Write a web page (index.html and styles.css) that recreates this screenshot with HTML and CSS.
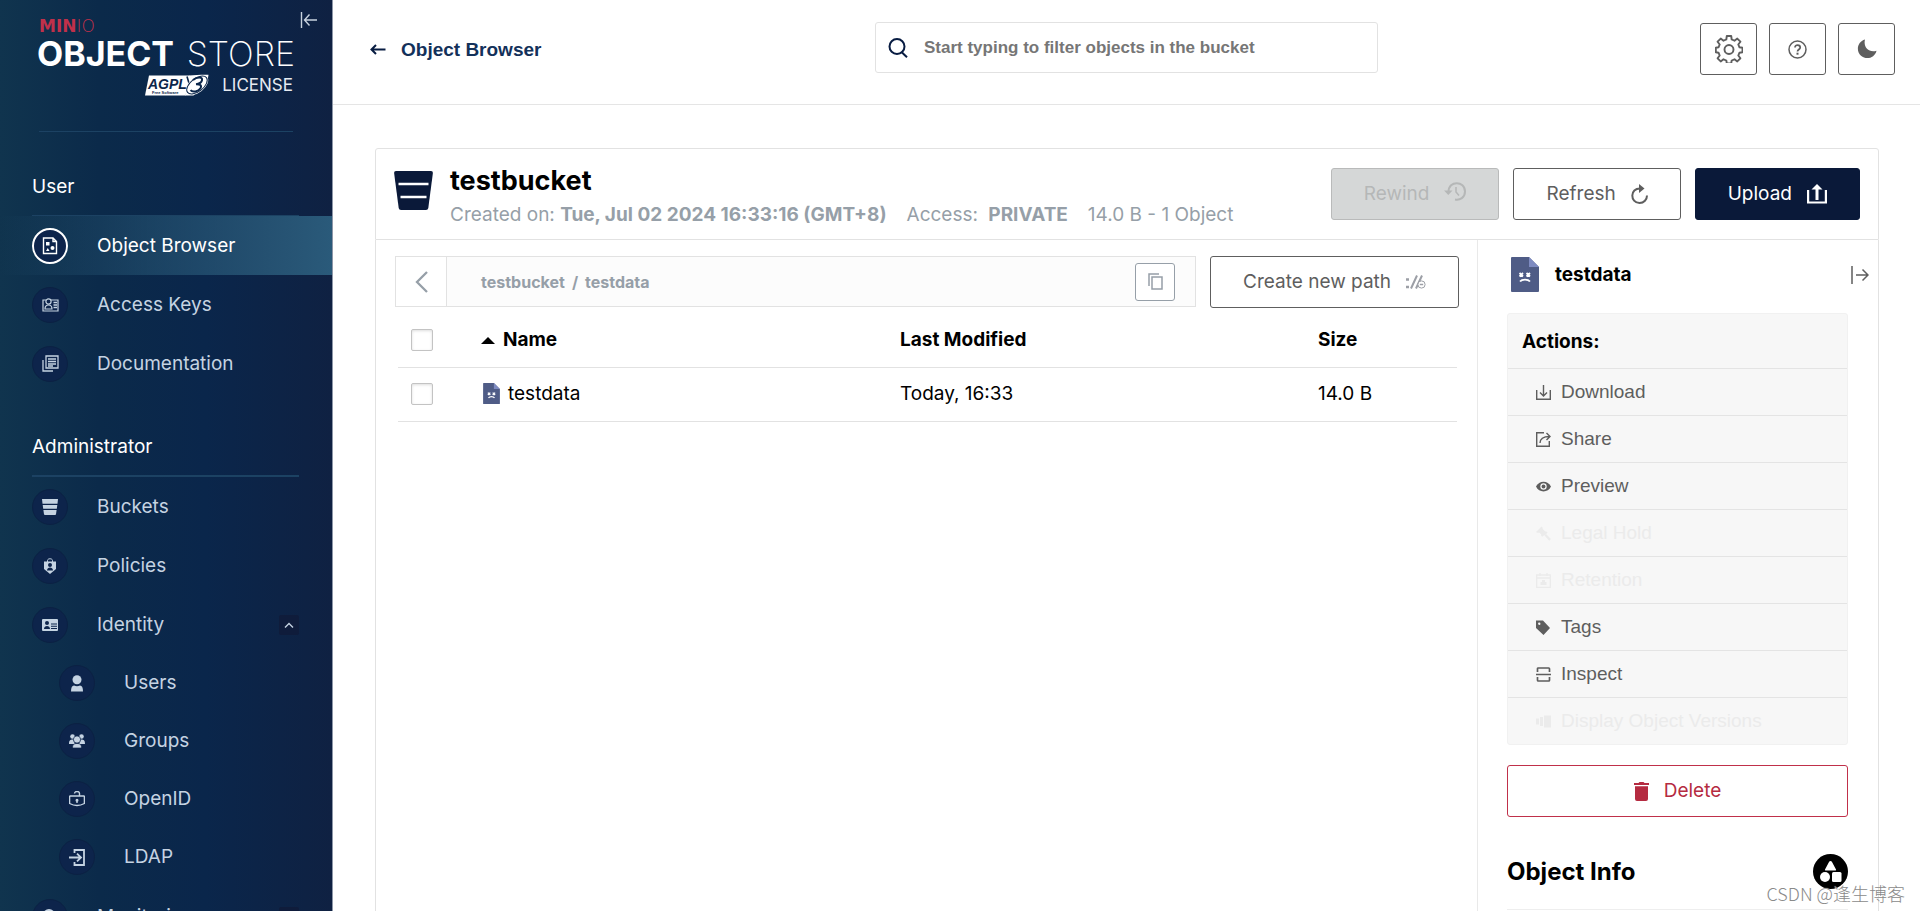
FILE: index.html
```html
<!DOCTYPE html>
<html lang="en">
<head>
<meta charset="utf-8">
<title>MinIO Console</title>
<link rel="stylesheet" href="styles.css">
</head>
<body>
<div class="app">
  <aside class="sidebar">
    <button class="collapse" type="button" aria-label="Collapse menu">
      <svg width="18" height="16" viewBox="0 0 18 16" fill="none" stroke="currentColor" stroke-width="1.4"><path d="M1.5 0v16M17 8H4.500M9.500 2.500L4.500 8l5 5.500"/></svg>
    </button>
    <div class="logo">
      <svg class="logo-art" width="256" height="80" viewBox="0 0 256 80" role="img" aria-label="MinIO Object Store AGPLv3 License">
        <text x="0" y="14" class="logo-brand">MIN<tspan class="logo-thin">IO</tspan></text>
        <text x="-2" y="48" class="logo-name">OBJECT</text>
        <text x="256" y="48" text-anchor="end" class="logo-name logo-light">STORE</text>
        <path d="M110 57.500h40.500l-4 20H106z" fill="#fff"/>
        <path d="M150 57.500c6-.5 13-1 19.500-.8l-1 6-14 14.800H146z" fill="#fff"/>
        <path d="M148 58.500l4 13.500L160 61" fill="none" stroke="#0b264a" stroke-width="1.600"/>
        <ellipse cx="158" cy="67" rx="13" ry="7.500" transform="rotate(-38 158 67)" fill="#fff"/>
        <ellipse cx="158" cy="67" rx="12" ry="6.500" transform="rotate(-38 158 67)" fill="none" stroke="#0b264a"/>
        <path d="M154 62c4-3.500 10-3.500 9 .3-.5 2.500-4 3.700-6 3.900 4-.2 6 1.200 4.500 4-2 3.500-8 4.500-10 2" fill="none" stroke="#0b264a" stroke-width="2"/>
        <text x="109" y="71" class="logo-agpl">AGPL</text>
        <text x="113" y="76" class="logo-free">Free Software</text>
        <text x="254" y="73" text-anchor="end" class="logo-license">LICENSE</text>
      </svg>
    </div>
    <nav class="menu" aria-label="Main">
      <h2 class="menu-title">User</h2>
      <ul class="menu-list">
        <li><a class="item active" href="#"><span class="dot"><svg width="16" height="18" viewBox="0 0 16 18" fill="none" stroke="currentColor" stroke-width="1.400"><path d="M1.500 1h9.500l3.500 3.500V16.500h-13zM11 1v3.500h3.500"/><path d="M4 5h3.500v3.500H4zM4 14l1.800-3 1.700 3z" fill="currentColor" stroke="none"/><circle cx="10.500" cy="11" r="2" fill="currentColor" stroke="none"/></svg></span>Object Browser</a></li>
        <li><a class="item" href="#"><span class="dot"><svg width="17" height="14" viewBox="0 0 17 14" fill="none" stroke="currentColor" stroke-width="1.200"><path d="M4 2H1v11h15V2H9"/><circle cx="6.500" cy="3.500" r="2.600"/><path d="M3 11c0-2.500 1-4 3.500-4s3.500 1.500 3.500 4z"/><path d="M11.500 4.500H15M11.500 7H15M11.500 9.500H15" stroke-width="1.600"/></svg></span>Access Keys</a></li>
        <li><a class="item" href="#"><span class="dot"><svg width="17" height="17" viewBox="0 0 17 17" fill="none" stroke="currentColor" stroke-width="1.300"><path d="M4 1h12v12H4zM6 4h8M6 6.500h8M6 9h8M6 11h5M1 5v11h10"/></svg></span>Documentation</a></li>
      </ul>
      <h2 class="menu-title admin">Administrator</h2>
      <ul class="menu-list">
        <li><a class="item" href="#"><span class="dot"><svg width="16" height="16" viewBox="0 0 16 16" fill="currentColor"><path d="M0 0h16l-.5 4.700H.5zM.7 6h14.600l-.5 3.800H1.200zM1.400 11h13.200L14 15.200q-.1.800-1 .8H3q-.9 0-1-.8z"/></svg></span>Buckets</a></li>
        <li><a class="item" href="#"><span class="dot"><svg width="12" height="16" viewBox="0 0 12 16"><path d="M3.500 4V2.500C3.500.2 8.500.2 8.500 2.500V4" fill="none" stroke="currentColor"/><path d="M0 3.500h12V11l-6 5-6-5z" fill="currentColor"/><circle cx="6" cy="7" r="2" fill="#0d244b"/><path d="M3 12.500c0-4 6-4 6 0z" fill="#0d244b"/></svg></span>Policies</a></li>
        <li><a class="item" href="#"><span class="dot"><svg width="16" height="12" viewBox="0 0 16 12"><rect width="16" height="12" rx="1" fill="currentColor"/><circle cx="5" cy="4" r="2" fill="#0d244b"/><path d="M2 10c0-4 6-4 6 0zM9 4.500h6v1H9zM9 6.800h6v1H9zM9 9h6v1H9z" fill="#0d244b"/></svg></span>Identity<span class="toggle"><svg width="10" height="6" viewBox="0 0 10 6" fill="none" stroke="currentColor" stroke-width="1.400"><path d="M1 5.500l4-4 4 4"/></svg></span></a>
          <ul class="menu-list sub">
            <li><a class="item" href="#"><span class="dot"><svg width="12" height="17" viewBox="0 0 12 17" fill="currentColor"><circle cx="6" cy="4.700" r="4.500"/><path d="M0 16.500c0-4 1-6 3-6 2 1 4 1 6 0 2 0 3 2 3 6z"/></svg></span>Users</a></li>
            <li><a class="item" href="#"><span class="dot"><svg width="16" height="14" viewBox="0 0 16 14" fill="currentColor"><circle cx="3.500" cy="2.500" r="2.300"/><circle cx="12.500" cy="2.500" r="2.300"/><path d="M0 10c0-3.500 1-4.500 4-4.500l2 4.500zM16 10c0-3.500-1-4.500-4-4.500L10 10z"/><g stroke="#0d244b" stroke-width=".7"><path d="M3.500 14c0-3.500 1.500-4.500 4.500-4.500s4.500 1 4.500 4.500z"/><circle cx="8" cy="5.500" r="3.600"/></g></svg></span>Groups</a></li>
            <li><a class="item" href="#"><span class="dot"><svg width="16" height="16" viewBox="0 0 16 16" fill="none" stroke="currentColor" stroke-width="1.400"><path d="M1.200 5h13.600q.6 0 .6.600V12.500q-7.400 4-14.800 0V5.600q0-.6.600-.6zM5.500 2.500C5.500-.2 10.500-.2 10.500 2.500V5M8 9.500V12"/><circle cx="8" cy="9.300" r=".8" fill="currentColor"/></svg></span>OpenID</a></li>
            <li><a class="item" href="#"><span class="dot"><svg width="16" height="17" viewBox="0 0 16 17" fill="none" stroke="currentColor" stroke-width="1.800"><path d="M5.500 4V1H15v15H5.500v-3M0 8.500h11.500M8 4.700l4 3.800-4 3.800"/></svg></span>LDAP</a></li>
          </ul>
        </li>
        <li><a class="item" href="#"><span class="dot"><svg width="16" height="16" viewBox="0 0 16 16" fill="none" stroke="currentColor" stroke-width="2"><circle cx="7" cy="6" r="5"/><path d="M10.500 10l4.500 5"/></svg></span>Monitoring<span class="toggle"><svg width="10" height="6" viewBox="0 0 10 6" fill="none" stroke="currentColor" stroke-width="1.400"><path d="M1 .5l4 4 4-4"/></svg></span></a></li>
      </ul>
    </nav>
  </aside>

  <main class="main">
    <header class="topbar">
      <a class="back" href="#"><svg width="16" height="11" viewBox="0 0 16 11" fill="none" stroke="#081c42" stroke-width="2"><path d="M15.500 5.500H2M6 1L1.500 5.500 6 10"/></svg>Object Browser</a>
      <label class="search">
        <svg width="20" height="20" viewBox="0 0 20 20" fill="none" stroke="#081c42" stroke-width="2"><circle cx="9" cy="8.500" r="7.500"/><path d="M13.500 14l5.500 5.300"/></svg>
        <input type="text" placeholder="Start typing to filter objects in the bucket" aria-label="Filter objects">
      </label>
      <div class="tools">
        <button class="btn square" type="button" aria-label="Settings"><svg width="28" height="28" viewBox="0 0 28 28" fill="none" stroke="currentColor" stroke-width="1.900" stroke-linejoin="round"><path d="M11.800 1h4.400l.5 3.500 2.800 1.200 2.800-2.100 3.100 3.100-2.100 2.800 1.200 2.800 3 .5v4.400l-3 .5-1.200 2.800 2.100 2.800-3.100 3.100-2.800-2.100-2.800 1.200-.5 3h-4.400l-.5-3-2.800-1.200-2.800 2.100-3.100-3.100 2.100-2.800L3.500 17.700 .8 17.200v-4.400l2.700-.5 1.200-2.800-2.100-2.800 3.100-3.100 2.800 2.100 2.800-1.200z"/><circle cx="14" cy="14.500" r="4.500"/></svg></button>
        <button class="btn square" type="button" aria-label="Help"><svg width="19" height="19" viewBox="0 0 19 19" fill="none" stroke="currentColor" stroke-width="1.500"><circle cx="9.500" cy="9.500" r="8.500"/><path d="M7 7.500c0-3.300 5.200-3.200 5.200 0 0 2-2.700 2-2.700 4" stroke-width="1.700"/><path d="M9.500 12.700v2" stroke-width="2"/></svg></button>
        <button class="btn square" type="button" aria-label="Dark mode"><svg width="20" height="20" viewBox="0 0 20 20" fill="currentColor"><path d="M8 .5C.5 2.500-1.500 12 4 16.700c5.500 4.800 14 2 15.500-5C12 14 6 8.500 8 .5z"/></svg></button>
      </div>
    </header>

    <section class="content">
      <div class="bucket-head">
        <svg class="bucket-icon" width="39" height="39" viewBox="0 0 39 39"><path d="M2 0h35q2 0 1.900 2l-4.600 35q-.3 2-2.300 2H7q-2 0-2.300-2L.1 2Q0 0 2 0z" fill="#0a1939"/><path d="M4.500 13h30M6.500 26h26" stroke="#fff" stroke-width="2.500"/></svg>
        <div class="bucket-text">
          <h1 class="bucket-name">testbucket</h1>
          <p class="bucket-meta"><span>Created on: <b>Tue, Jul 02 2024 16:33:16 (GMT+8)</b></span><span>Access: <b class="access">PRIVATE</b></span><span>14.0 B - 1 Object</span></p>
        </div>
        <div class="bucket-actions">
          <button class="btn off" type="button" disabled>Rewind<svg class="raised" width="22" height="20" viewBox="0 0 22 20" fill="none" stroke="currentColor" stroke-width="2"><path d="M4.500 10C4.500-2 21-1.500 21 9.500c0 6-5 9-10 8"/><path d="M0 8.500h8.500L4.300 13z" fill="currentColor" stroke="none"/><path d="M12 5v5l3 3.500" stroke-width="1.500"/></svg></button>
          <button class="btn" type="button">Refresh<svg width="17" height="20" viewBox="0 0 17 20" fill="none" stroke="currentColor" stroke-width="2"><path d="M9.500 4.500C-1.500 4-1 19 8.500 19c4.500 0 7.500-3.500 7.500-7.500"/><path d="M8 0l5.500 4.500L8 9z" fill="currentColor" stroke="none"/></svg></button>
          <button class="btn solid" type="button">Upload<svg width="20" height="20" viewBox="0 0 20 20" fill="none" stroke="currentColor" stroke-width="2.200"><path d="M1.100 6v12.500h17.800V6"/><path d="M10 16V4" stroke-width="3"/><path d="M10 0l5.500 5.500h-11z" fill="currentColor" stroke="none"/></svg></button>
        </div>
      </div>

      <div class="panes">
        <div class="browser">
          <div class="pathrow">
            <div class="pathbar">
              <button class="path-back" type="button" aria-label="Go up"><svg width="13" height="22" viewBox="0 0 13 22" fill="none" stroke="currentColor" stroke-width="2.300"><path d="M12 1L2 11l10 10"/></svg></button>
              <div class="crumbs"><a href="#">testbucket</a><span>/</span><a href="#">testdata</a></div>
              <button class="copy" type="button" aria-label="Copy path"><svg width="15" height="17" viewBox="0 0 15 17" fill="none" stroke="currentColor" stroke-width="1.500"><path d="M4 4h10v12H4zM1 13V1h10"/></svg></button>
            </div>
            <button class="btn create" type="button">Create new path<svg width="20" height="14" viewBox="0 0 20 14" fill="none" stroke="#9c9fa6" stroke-width="1.500"><path d="M0 4.500h3M0 12h3" stroke-width="2.500"/><path d="M5 13.500L11 .5M10 13.500L16 .5" stroke-width="2"/><circle cx="15.500" cy="9.500" r="3.600" fill="#fff" stroke-width="1"/><path d="M13.800 9.500h3.400" stroke-width="1.500"/></svg></button>
          </div>
          <table class="objects">
            <thead>
              <tr><th class="c-check"><input type="checkbox" aria-label="Select all"></th><th class="c-name"><span class="sort"></span>Name</th><th class="c-date">Last Modified</th><th>Size</th></tr>
            </thead>
            <tbody>
              <tr><td class="c-check"><input type="checkbox" aria-label="Select testdata"></td><td class="c-name"><svg class="file" width="17" height="21" viewBox="0 0 28 35"><path d="M1 0h17l10 10v24q0 1-1 1H1q-1 0-1-1V1q0-1 1-1z" fill="#4f5c86"/><path d="M18 0l10 10H18z" fill="#7e8bc1"/><path d="M8 16l4 4m0-4l-4 4M16 16l4 4m0-4l-4 4M9 25c2-3 8-3 10 0" fill="none" stroke="#fff" stroke-width="2.200"/></svg>testdata</td><td class="c-date">Today, 16:33</td><td>14.0 B</td></tr>
            </tbody>
          </table>
        </div>

        <aside class="details">
          <div class="detail-head">
            <svg width="28" height="35" viewBox="0 0 28 35"><path d="M1 0h17l10 10v24q0 1-1 1H1q-1 0-1-1V1q0-1 1-1z" fill="#4f5c86"/><path d="M18 0l10 10H18z" fill="#7e8bc1"/><path d="M8.500 16l3.500 3.500m0-3.500l-3.500 3.500M15.500 16l3.500 3.500m0-3.500l-3.500 3.500M9 24.500c2-2.500 8-2.500 10 0" fill="none" stroke="#fff" stroke-width="1.800"/></svg>
            <strong class="detail-name">testdata</strong>
            <button class="hide" type="button" aria-label="Close panel"><svg width="18" height="18" viewBox="0 0 18 18" fill="none" stroke="currentColor" stroke-width="1.500"><path d="M1 0v18M5 9h12M11.500 3.500L17 9l-5.500 5.500"/></svg></button>
          </div>
          <div class="detail-body">
            <div class="actions">
              <h2 class="actions-title">Actions:</h2>
              <button class="action" type="button"><svg width="15" height="15" viewBox="0 0 15 15" fill="none" stroke="currentColor" stroke-width="1.400"><path d="M.7 5v9.300h13.600V5M7.500 0v10.500M4 7.500L7.500 11 11 7.500"/></svg>Download</button>
              <button class="action" type="button"><svg width="15" height="15" viewBox="0 0 15 15" fill="none" stroke="currentColor" stroke-width="1.400"><path d="M8 .7H.7v13.600h12.600V9"/><path d="M4 11c0-4 3-6.500 9.500-6.500M10.500 1L14 4.500 10.500 8"/></svg>Share</button>
              <button class="action" type="button"><svg width="15" height="15" viewBox="0 0 15 15"><path d="M0 7.500C3 1 12 1 15 7.500 12 14 3 14 0 7.500z" fill="currentColor"/><circle cx="7.500" cy="7.500" r="3.200" fill="#f7f7f7"/><circle cx="7.500" cy="7.500" r="1.900" fill="currentColor"/></svg>Preview</button>
              <button class="action" type="button" disabled><svg width="15" height="15" viewBox="0 0 15 15" fill="currentColor"><path d="M0 6l5.500-5.500 1.200 1.200v1.200l2.600 2.600h1.200l1.200 1.200-5.500 4-1-1V8.500L3.500 6.800H1zM8.500 9.500L10 8l5 5-1.800 1.800z"/></svg>Legal Hold</button>
              <button class="action" type="button" disabled><svg width="15" height="15" viewBox="0 0 15 15" fill="none" stroke="currentColor" stroke-width="1.300"><path d="M.7 2h13.600v12.300H.7zM.7 5h13.600M4 0v3M11 0v3"/><path d="M4.500 9h6v3h-6zM6 9V7h3v2z" fill="currentColor" stroke="none"/></svg>Retention</button>
              <button class="action" type="button"><svg width="15" height="15" viewBox="0 0 15 15" fill="currentColor"><path fill-rule="evenodd" d="M0 .5h7l7 7.500-6.500 7L0 8zM3.200 2.500a1.200 1.200 0 1 0 .1 2.400 1.200 1.200 0 0 0-.1-2.400z"/></svg>Tags</button>
              <button class="action" type="button"><svg width="15" height="15" viewBox="0 0 15 15" fill="none" stroke="currentColor" stroke-width="1.700"><path d="M1.500 5V1.800q0-.8.800-.8h10.400q.8 0 .8.800V5M1.500 10v3.200q0 .8.800.8h10.400q.8 0 .8-.8V10M0 7.500h15"/></svg>Inspect</button>
              <button class="action" type="button" disabled><svg width="15" height="15" viewBox="0 0 15 15" fill="currentColor"><path d="M8 1.500h7v12H8zM4 3h3v9H4zM0 4.500h3v6H0z"/></svg>Display Object Versions</button>
            </div>
            <button class="btn delete" type="button"><svg width="15" height="19" viewBox="0 0 15 19" fill="currentColor"><path d="M0 1h4.500L5.500 0h4l1 1H15v2H0zM1 4.300h13V17q0 2-2 2H3q-2 0-2-2z"/></svg>Delete</button>
            <div class="info-head">
              <h2 class="info-title">Object Info</h2>
              <svg width="35" height="35" viewBox="0 0 35 35"><circle cx="17.500" cy="17.500" r="17.500" fill="#000"/><g fill="#fff"><path d="M17.500 7q1 0 1.500 1l4 7.500q.5 1-.7 1h-9.600q-1.200 0-.7-1L16 8q.5-1 1.500-1z"/><circle cx="12" cy="23" r="5"/><rect x="19" y="18" width="9.500" height="10" rx="1.500"/></g></svg>
            </div>
          </div>
        </aside>
      </div>
    </section>
  </main>
  <div class="watermark">CSDN @逢生博客</div>
</div>
</body>
</html>
```

FILE: styles.css
```css
* { box-sizing: border-box; }

body {
  margin: 0;
  font-family: Inter, "Liberation Sans", sans-serif;
  font-size: 19px;
  line-height: 24px;
  color: #000;
  background: #fff;
}

h1, h2, p, ul { margin: 0; padding: 0; }
ul { list-style: none; }
a { color: inherit; text-decoration: none; }
svg { display: block; flex: none; }
button { font: inherit; color: inherit; cursor: pointer; }

.app {
  display: flex;
  height: 100vh;
  overflow: hidden;
  position: relative;
}

/* Sidebar */
.sidebar {
  position: relative;
  flex: none;
  width: 333px;
  overflow: hidden;
  border-right: 1px solid #8d97a8;
  background: linear-gradient(90deg, #10344e 0%, #0b2a4a 30%, #0a264b 62%, #0f2142 100%);
  color: #fff;
}
.collapse {
  position: absolute;
  top: 12px;
  right: 14px;
  padding: 0;
  border: 0;
  background: none;
  color: #c8d2de;
}
.logo {
  margin: 0 39px;
  padding: 18px 0 33px;
  border-bottom: 1px solid #1c4263;
}
.logo-art { overflow: visible; }
.logo-brand { font: 700 17px "DejaVu Sans", sans-serif; fill: #c0304a; }
.logo-thin { font-weight: 200; }
.logo-name { font: 700 34px Inter, sans-serif; fill: #fff; }
.logo-light { font-weight: 200; }
.logo-agpl { font: italic 700 14px "Liberation Sans", sans-serif; fill: #0b264a; }
.logo-free { font: 700 4px "Liberation Sans", sans-serif; fill: #0b264a; }
.logo-license { font: 400 17px Inter, sans-serif; fill: #e6ebf1; }

.menu-title {
  margin: 0 33px 0 32px;
  padding: 43px 0 16px;
  border-bottom: 1px solid #1c4263;
  font-size: 19px;
  font-weight: 400;
}
.menu-title.admin { padding-top: 42px; border-bottom-width: 2px; }
.item {
  display: flex;
  align-items: center;
  height: 59px;
  padding: 0 33px 0 32px;
  color: #c5d3e2;
}
.item.active {
  color: #fff;
  background: linear-gradient(90deg, rgba(42, 92, 122, 0) 0%, rgba(42, 92, 122, 0.5) 45%, #2a5a7a 100%);
}
.dot {
  display: flex;
  align-items: center;
  justify-content: center;
  width: 36px;
  height: 36px;
  margin-right: 29px;
  border: 1px solid #0b2143;
  border-radius: 50%;
  background: #0d244b;
}
.active .dot { border: 2px solid #fff; }
.sub { padding-bottom: 1px; }
.sub .item { height: 58px; padding-left: 59px; }
.toggle {
  display: flex;
  align-items: center;
  justify-content: center;
  width: 20px;
  height: 20px;
  margin-left: auto;
  border-radius: 2px;
  background: #0f1c3b;
}

/* Top bar */
.main {
  flex: 1;
  display: flex;
  flex-direction: column;
  min-width: 0;
}
.topbar {
  display: grid;
  grid-template-columns: 1fr minmax(200px, 503px) 1fr;
  height: 105px;
  padding-top: 22px;
  border-bottom: 1px solid #e5e5e5;
}
.back {
  display: flex;
  gap: 15px;
  align-items: center;
  height: 55px;
  padding-left: 37px;
  font-family: "Liberation Sans", Arial, sans-serif;
  font-weight: 700;
  color: #13315a;
}
.search {
  display: flex;
  align-items: center;
  gap: 16px;
  height: 51px;
  padding: 0 12px;
  border: 1px solid #e2e2e2;
  border-radius: 3px;
}
.search input {
  flex: 1;
  min-width: 0;
  padding: 0;
  border: 0;
  outline: 0;
  font: 700 17px/24px "Liberation Sans", Arial, sans-serif;
}
.search input::placeholder { color: #767676; opacity: 1; }
.tools {
  display: flex;
  justify-content: flex-end;
  gap: 12px;
  padding: 1px 25px 0 0;
}
.btn {
  display: flex;
  align-items: center;
  justify-content: center;
  gap: 15px;
  height: 52px;
  padding: 0 32px;
  border: 1px solid #5e5e5e;
  border-radius: 3px;
  background: #fff;
  color: #5e5e5e;
  white-space: nowrap;
}
.btn.square { width: 57px; padding: 0; }
.btn.off { background: #d5d7d7; border-color: #b9baba; color: #b5b7b7; }
.btn.solid { background: #0a1939; border-color: #0a1939; color: #fff; }

/* Content */
.content {
  flex: 1;
  display: flex;
  flex-direction: column;
  min-height: 0;
  padding: 43px 41px 0 42px;
}
.bucket-head {
  display: flex;
  align-items: flex-start;
  padding: 19px 18px 19px 18px;
  border: 1px solid #e2e2e2;
  border-radius: 3px 3px 0 0;
}
.bucket-icon { margin-top: 3px; }
.bucket-text { margin-left: 17px; }
.bucket-name { padding-top: 1px; font-size: 27px; line-height: 24px; font-weight: 700; }
.bucket-meta {
  display: flex;
  gap: 20px;
  margin: 10px 0 -7px;
  color: #969fa8;
  white-space: nowrap;
}
.access { margin-left: 5px; }
.bucket-actions { display: flex; gap: 14px; margin-left: auto; }
.raised { margin-bottom: 4px; }

.panes {
  flex: 1;
  display: flex;
  min-height: 0;
  border: 1px solid #e2e2e2;
  border-top: 0;
  border-bottom: 0;
}
.browser { flex: 1; min-width: 0; padding: 16px 18px 0 19px; }
.pathrow { display: flex; gap: 14px; }
.pathbar {
  flex: 1;
  display: flex;
  align-items: center;
  height: 51px;
  border: 1px solid #e2e2e2;
  background: #fcfcfc;
  color: #969fa8;
}
.path-back {
  display: flex;
  align-items: center;
  justify-content: center;
  align-self: stretch;
  width: 51px;
  border: 0;
  border-right: 1px solid #e2e2e2;
  background: #fff;
  color: #969fa8;
}
.crumbs {
  flex: 1;
  display: flex;
  gap: 7px;
  padding-left: 34px;
  font-size: 16px;
  font-weight: 700;
}
.copy {
  display: flex;
  align-items: center;
  justify-content: center;
  width: 40px;
  height: 38px;
  margin-right: 20px;
  padding: 0;
  border: 1px solid #969fa8;
  border-radius: 3px;
  background: #fff;
}
.objects {
  width: calc(100% - 5px);
  margin: 5px 2px 0 3px;
  border-collapse: collapse;
  table-layout: fixed;
}
.objects th, .objects td {
  height: 54px;
  padding: 0;
  border-bottom: 1px solid #e2e2e2;
  text-align: left;
}
.objects th { font-weight: 700; }
.c-check { width: 83px; }
.c-name { width: 419px; }
.c-date { width: 418px; }
.objects input {
  display: block;
  appearance: none;
  width: 22px;
  height: 22px;
  margin: 0 0 0 13px;
  border: 1px solid #c3c3c3;
  border-radius: 2px;
  background: #fff;
  box-shadow: inset 0 1px 3px #dddddd;
}
.sort {
  display: inline-block;
  margin-right: 8px;
  border: 7px solid transparent;
  border-top: 0;
  border-bottom-color: #000;
  vertical-align: 2px;
}
.file { display: inline-block; margin: 0 8px 0 2px; vertical-align: -4px; }

/* Object details */
.details { flex: none; width: 401px; border-left: 1px solid #e9e9e9; }
.detail-head {
  display: flex;
  align-items: center;
  height: 73px;
  padding: 0 9px 4px 33px;
}
.detail-name { flex: 1; margin-left: 16px; }
.hide { padding: 0; border: 0; background: none; color: #5e5e5e; }
.detail-body { padding: 0 30px 0 29px; }
.actions {
  border: 1px solid #f1f1f1;
  border-radius: 3px;
  background: #f7f7f7;
}
.actions-title { padding: 16px 14px 14px; font-size: 19px; font-weight: 700; }
.action {
  display: flex;
  align-items: center;
  gap: 10px;
  width: 100%;
  height: 47px;
  padding: 0 28px;
  border: 0;
  border-top: 1px solid #e4e4e4;
  background: none;
  font-family: "Liberation Sans", Arial, sans-serif;
  color: #5e5e5e;
}
.action:disabled { color: #ebebeb; }
.btn.delete {
  width: 100%;
  margin-top: 20px;
  border-color: #c0304a;
  color: #b52b41;
}
.info-head {
  display: flex;
  align-items: center;
  justify-content: space-between;
  padding: 37px 0 20px;
  border-bottom: 1px solid #eee;
}
.info-title { font-size: 24px; font-weight: 700; }

.watermark {
  position: absolute;
  right: 15px;
  bottom: 6px;
  font: 300 18px/24px "Noto Sans CJK SC", sans-serif;
  color: #8a8a8a;
  text-shadow: 0 0 1px #fff;
}
```
